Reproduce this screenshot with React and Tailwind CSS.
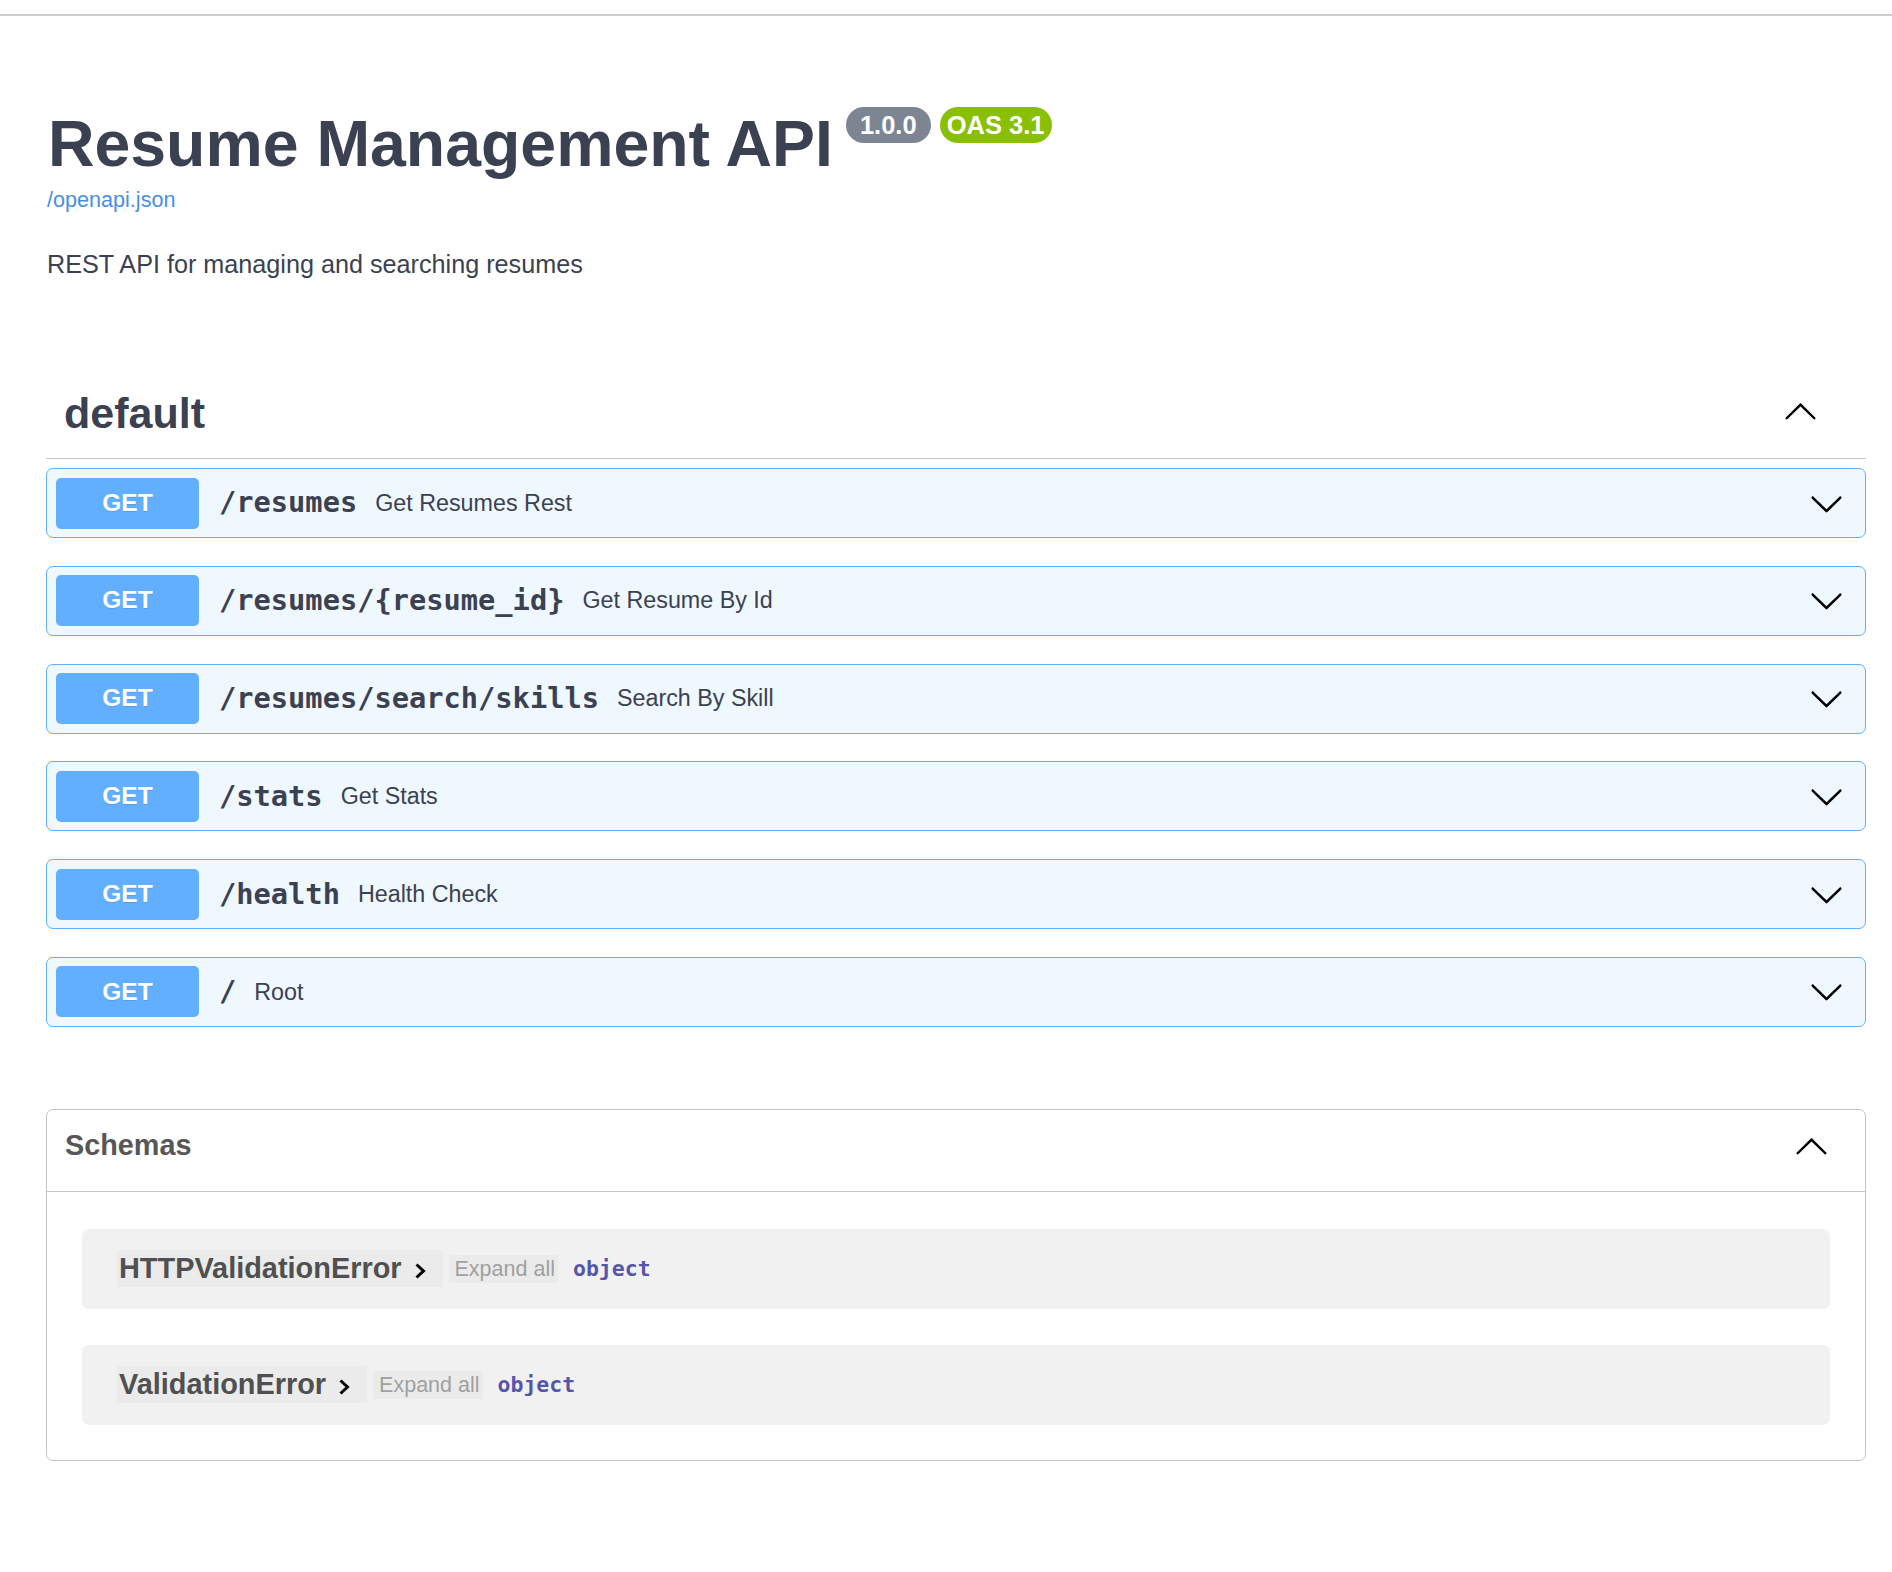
import React from 'react';

const sans = "font-['Liberation_Sans',Arial,sans-serif]";
const mono = "font-['DejaVu_Sans_Mono',Menlo,monospace]";

const endpoints = [
  { path: '/resumes', summary: 'Get Resumes Rest' },
  { path: '/resumes/{resume_id}', summary: 'Get Resume By Id' },
  { path: '/resumes/search/skills', summary: 'Search By Skill' },
  { path: '/stats', summary: 'Get Stats' },
  { path: '/health', summary: 'Health Check' },
  { path: '/', summary: 'Root' },
];

const schemas = ['HTTPValidationError', 'ValidationError'];

function ArrowDown({ className }) {
  return (
    <svg className={className} width="35" height="35" viewBox="0 0 20 20" fill="currentColor">
      <path d="M17.418 6.109c.272-.268.709-.268.979 0s.271.701 0 .969l-7.908 7.83c-.27.268-.707.268-.979 0l-7.908-7.830c-.27-.268-.27-.701 0-.969.271-.268.709-.268.979 0L10 13.25l7.418-7.141z" />
    </svg>
  );
}

function ArrowUp({ className }) {
  return (
    <svg className={className} width="35" height="35" viewBox="0 0 20 20" fill="currentColor">
      <path d="M17.418 14.908c.272.268.709.268.979 0s.271-.701 0-.969l-7.908-7.83c-.27-.268-.707-.268-.979 0l-7.908 7.83c-.27.268-.27.701 0 .969.271.268.709.268.979 0L10 7.767l7.418 7.141z" />
    </svg>
  );
}

function Opblock({ path, summary }) {
  return (
    <div className="h-[70px] rounded-[7px] border border-[#61affe] bg-[#eff7ff] flex items-center pl-[9px] pr-[21px]">
      <div className={`${sans} w-[143px] h-[51px] shrink-0 rounded-[5px] bg-[#61affe] flex items-center justify-center text-white font-bold text-[24.5px] [text-shadow:0_1px_0_rgba(0,0,0,0.1)]`}>
        GET
      </div>
      <span className={`${mono} ml-[20px] text-[28.7px] font-bold text-[#3b4151]`}>{path}</span>
      <span className={`${sans} ml-[18px] text-[23.3px] text-[#3b4151]`}>{summary}</span>
      <div className="flex-1" />
      <ArrowDown className="text-black" />
    </div>
  );
}

function SchemaRow({ name }) {
  return (
    <div className="h-[80px] rounded-[7px] bg-[#f1f1f1] flex items-center pl-[35px]">
      <span className="h-[37px] flex items-center pl-[2px] pr-[16px] bg-black/[0.025]">
        <span className={`${sans} text-[28.9px] font-bold text-[#505050]`}>{name}</span>
        <svg className="ml-[12px] mt-[4px]" width="13" height="18" viewBox="0 0 13 18" fill="none" stroke="black" strokeWidth="3">
          <path d="M2.5 2.5l7 6.5-7 6.5" />
        </svg>
      </span>
      <span className={`${sans} ml-[6px] h-[28px] flex items-center pl-[6px] pr-[3px] bg-black/[0.025] text-[21.5px] text-[#a0a0a0]`}>
        Expand all
      </span>
      <span className={`${mono} ml-[15px] text-[21.5px] font-bold text-[#5555aa]`}>object</span>
    </div>
  );
}

export default function App() {
  return (
    <div className="min-h-screen bg-white">
      <div className="mt-[14px] border-t-2 border-[#cccccc]" />
      <div className="pl-[46px] pr-[26px]">
        <div className="mt-[91px] flex items-start">
          <h1 className={`${sans} ml-[2px] text-[64.4px] leading-[74px] font-bold text-[#3b4151]`}>Resume Management API</h1>
          <div className="ml-[13px] flex gap-[9px]">
            <span className={`${sans} h-[36px] px-[7px] flex items-center rounded-full bg-[#7d8492] text-white font-bold text-[25.5px] whitespace-pre`}>
              {' 1.0.0 '}
            </span>
            <span className={`${sans} h-[36px] px-[7px] flex items-center rounded-full bg-[#89bf04] text-white font-bold text-[25.5px] whitespace-pre`}>
              OAS 3.1
            </span>
          </div>
        </div>
        <div className={`${sans} ml-[1px] mt-[6px] text-[21.6px] leading-[26px] text-[#4990e2]`}>/openapi.json</div>
        <p className={`${sans} ml-[1px] mt-[36px] text-[25.2px] leading-[30px] text-[#3b4151]`}>
          REST API for managing and searching resumes
        </p>

        <div className="mt-[89px] h-[91px] flex items-center justify-between border-b border-[#c4c6cb] pl-[18px] pr-[48px]">
          <h3 className={`${sans} text-[43px] leading-[50px] font-bold text-[#3b4151]`}>default</h3>
          <ArrowUp className="text-black mb-[5px]" />
        </div>

        <div className="mt-[9px] flex flex-col gap-[27.8px]">
          {endpoints.map((e) => (
            <Opblock key={e.path} path={e.path} summary={e.summary} />
          ))}
        </div>

        <div className="mt-[82px] rounded-[7px] border border-[#c4c6cb]">
          <div className="h-[82px] flex items-start justify-between border-b border-[#c4c6cb] pl-[18px] pr-[36px] pt-[18px]">
            <h4 className={`${sans} text-[28.8px] leading-[34px] font-bold text-[#575757]`}>Schemas</h4>
            <ArrowUp className="text-black" />
          </div>
          <div className="px-[35px] pt-[37px] pb-[35px] flex flex-col gap-[36px]">
            {schemas.map((s) => (
              <SchemaRow key={s} name={s} />
            ))}
          </div>
        </div>
      </div>
    </div>
  );
}
